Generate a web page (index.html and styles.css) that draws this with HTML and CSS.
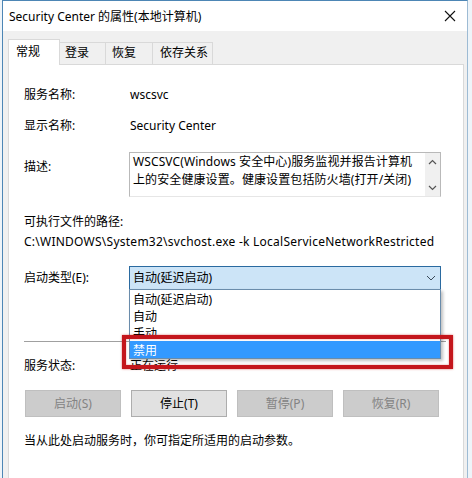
FILE: index.html
```html
<!DOCTYPE html>
<html lang="zh-CN">
<head>
<meta charset="utf-8">
<title>Security Center 的属性(本地计算机)</title>
<link rel="stylesheet" href="styles.css">
</head>
<body>
<div class="window">
  <div class="titlebar">
    <span class="title">Security Center 的属性(本地计算机)</span>
    <svg class="close" width="12" height="12" viewBox="0 0 12 12"><path d="M1 1 L11 11 M11 1 L1 11" stroke="#111" stroke-width="1.1" fill="none"/></svg>
  </div>
  <div class="client">
    <div class="tabs">
      <div class="tab active t1">常规</div>
      <div class="tab t2">登录</div>
      <div class="tab t3">恢复</div>
      <div class="tab t4">依存关系</div>
    </div>
    <div class="panel">
      <div class="row r-name"><span class="label">服务名称:</span><span class="value latin">wscsvc</span></div>
      <div class="row r-display"><span class="label">显示名称:</span><span class="value">Security Center</span></div>
      <div class="row r-desc">
        <span class="label label-desc">描述:</span>
        <div class="textbox">
          <div class="textbox-text">WSCSVC(Windows 安全中心)服务监视并报告计算机<br>上的安全健康设置。健康设置包括防火墙(打开/关闭)</div>
          <div class="vscroll">
            <svg width="9" height="6" viewBox="0 0 9 6"><path d="M1 5 L4.5 1.5 L8 5" stroke="#555" stroke-width="1.2" fill="none"/></svg>
            <svg width="9" height="6" viewBox="0 0 9 6"><path d="M1 1 L4.5 4.5 L8 1" stroke="#555" stroke-width="1.2" fill="none"/></svg>
          </div>
        </div>
      </div>
      <div class="path-label">可执行文件的路径:</div>
      <div class="path">C:\WINDOWS\System32\svchost.exe -k LocalServiceNetworkRestricted</div>
      <div class="row r-start">
        <span class="label">启动类型(E):</span>
        <div class="combo">
          <span class="combo-text">自动(延迟启动)</span>
          <svg class="chev" width="10" height="6" viewBox="0 0 10 6"><path d="M1 1 L5 5 L9 1" stroke="#3a4a5a" stroke-width="1" fill="none"/></svg>
          <div class="dropdown">
            <div class="opt">自动(延迟启动)</div>
            <div class="opt">自动</div>
            <div class="opt">手动</div>
            <div class="opt selected">禁用</div>
          </div>
        </div>
      </div>
      <div class="sep"></div>
      <div class="row r-status"><span class="label">服务状态:</span><span class="value">正在运行</span></div>
      <div class="buttons">
        <div class="btn disabled">启动(S)</div>
        <div class="btn">停止(T)</div>
        <div class="btn disabled">暂停(P)</div>
        <div class="btn disabled">恢复(R)</div>
      </div>
      <div class="hint">当从此处启动服务时，你可指定所适用的启动参数。</div>
      <div class="highlight"></div>
    </div>
  </div>
</div>
</body>
</html>
```

FILE: styles.css
```css
* { box-sizing: border-box; }
html, body {
  margin: 0;
  padding: 0;
  width: 472px;
  height: 478px;
  overflow: hidden;
  background: #eef4f9;
}
body {
  font-family: "Noto Sans", "Noto Sans CJK SC", sans-serif;
  font-size: 12px;
  color: #000;
}
.window {
  margin-left: 2px;
  width: 466px;
  height: 478px;
  border-top: 1px solid #4d86b5;
  border-left: 1px solid #4d86b5;
  border-right: 1px solid #9dbbd4;
  display: flex;
  flex-direction: column;
  overflow: hidden;
}
.titlebar {
  height: 30px;
  flex: none;
  background: #fff;
  display: flex;
  align-items: center;
  justify-content: space-between;
  padding: 0 11px 0 6px;
}
.title { line-height: 16px; padding-top: 1px; }
.close { display: block; }
.client {
  flex: none;
  height: 500px;
  background: #f0f0f0;
  padding: 8px 3px 0 5px;
  display: flex;
  flex-direction: column;
}
.tabs {
  display: flex;
  align-items: flex-end;
  height: 25px;
  flex: none;
  position: relative;
  z-index: 2;
}
.tab {
  height: 22px;
  border: 1px solid #d9d9d9;
  border-bottom: none;
  background: #f0f0f0;
  line-height: 20px;
  padding-left: 5px;
  margin-left: -1px;
}
.tab.t1 { margin-left: 0; width: 52px; }
.tab.t2 { width: 47px; }
.tab.t3 { width: 48px; padding-left: 6px; }
.tab.t4 { width: 61px; padding-left: 7px; }
.tab.active {
  height: 26px;
  background: #fff;
  padding-left: 7px;
  line-height: 24px;
  margin-bottom: -1px;
  position: relative;
  z-index: 3;
}
.panel {
  flex: 1;
  background: #fff;
  border: 1px solid #d9d9d9;
  padding: 0 0 0 15px;
  position: relative;
  display: flex;
  flex-direction: column;
}
.row {
  display: flex;
  align-items: flex-start;
  line-height: 16px;
}
.label { width: 105px; flex: none; }
.value { padding-left: 1px; }
.r-name { margin-top: 22px; }
.r-display { margin-top: 15px; }
.r-desc { margin-top: 18px; }
.label-desc { padding-top: 7px; }
.textbox {
  width: 312px;
  height: 45px;
  border: 1px solid #b9b9b9;
  border-bottom-color: #e6e6e6;
  display: flex;
  justify-content: space-between;
}
.textbox-text {
  padding: 0 0 0 3px;
  line-height: 18px;
  white-space: nowrap;
  letter-spacing: 0.1px;
}
.vscroll {
  width: 15px;
  background: #f0f0f0;
  display: flex;
  flex-direction: column;
  justify-content: space-between;
  align-items: center;
  padding: 6px 0 5px;
}
.vscroll svg { display: block; }
.path-label { margin-top: 17px; line-height: 16px; }
.path { margin-top: 4px; line-height: 16px; white-space: nowrap; letter-spacing: 0.25px; }
.r-start { margin-top: 16px; align-items: center; }
.combo {
  width: 312px;
  height: 24px;
  background: #cce4f7;
  border: 1px solid #2a6aa0;
  position: relative;
  display: flex;
  align-items: center;
  justify-content: space-between;
  padding: 0 4px 0 3px;
}
.chev { display: block; }
.dropdown {
  position: absolute;
  left: -1px;
  top: 22px;
  width: 312px;
  background: #fff;
  border: 1px solid #6a8cab;
  box-shadow: 2px 2px 3px rgba(0, 0, 0, 0.25);
  z-index: 5;
}
.opt {
  height: 17px;
  line-height: 17px;
  padding: 1px 0 0 3px;
}
.opt.selected { background: #3399ff; color: #fff; }
.sep {
  margin-top: 51px;
  height: 1px;
  width: 422px;
  background: #a0a0a0;
}
.r-status { margin-top: 16px; }
.buttons {
  margin-top: 16px;
  margin-left: 1px;
  display: flex;
  gap: 10px;
}
.btn {
  width: 96px;
  height: 27px;
  border: 1px solid #adadad;
  background: #e1e1e1;
  text-align: center;
  line-height: 25px;
}
.btn.disabled {
  background: #cccccc;
  border-color: #bfbfbf;
  color: #838383;
}
.hint { margin-top: 16px; line-height: 16px; }
.highlight {
  position: absolute;
  left: 113px;
  top: 270px;
  width: 331px;
  height: 34px;
  border: 4px solid #c4161c;
  box-shadow: 0 0 2px rgba(200, 20, 20, 0.6), inset 0 0 2px rgba(200, 20, 20, 0.5);
  z-index: 6;
}
```
